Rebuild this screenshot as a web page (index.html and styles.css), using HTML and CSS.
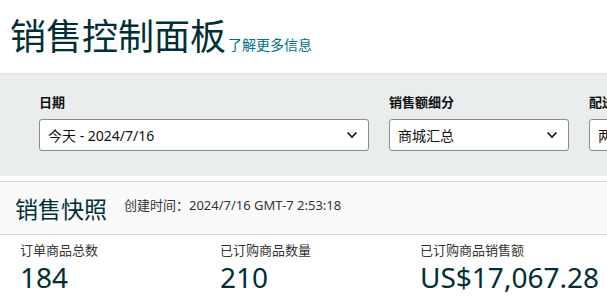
FILE: index.html
```html
<!DOCTYPE html>
<html lang="zh-CN">
<head>
    <meta charset="UTF-8">
    <meta name="viewport" content="width=device-width, initial-scale=1.0">
    <title>销售控制面板</title>
    <link rel="stylesheet" href="styles.css">
</head>
<body>
    <!-- Page title -->
    <div class="page-header">
        <h1 class="page-title">销售控制面板</h1>
        <a class="learn-more" href="#">了解更多信息</a>
    </div>

    <!-- Filters -->
    <div class="filters">
        <div class="filter filter-date">
            <label class="filter-label">日期</label>
            <div class="select">
                <span>今天 - 2024/7/16</span>
                <svg class="chevron" width="12" height="8" viewBox="0 0 12 8"><polyline points="1.5,1.5 6,6 10.5,1.5" fill="none" stroke="#0f1111" stroke-width="1.6"/></svg>
            </div>
        </div>
        <div class="filter filter-breakdown">
            <label class="filter-label">销售额细分</label>
            <div class="select">
                <span>商城汇总</span>
                <svg class="chevron" width="12" height="8" viewBox="0 0 12 8"><polyline points="1.5,1.5 6,6 10.5,1.5" fill="none" stroke="#0f1111" stroke-width="1.6"/></svg>
            </div>
        </div>
        <div class="filter filter-channel">
            <label class="filter-label">配送渠道</label>
            <div class="select">
                <span>两者</span>
            </div>
        </div>
    </div>

    <!-- Snapshot -->
    <div class="snapshot">
        <div class="snapshot-header">
            <h2 class="snapshot-title">销售快照</h2>
            <span class="snapshot-time">创建时间：2024/7/16 GMT-7 2:53:18</span>
        </div>
        <div class="metrics">
            <div class="metric">
                <p class="metric-label">订单商品总数</p>
                <p class="metric-value">184</p>
            </div>
            <div class="metric">
                <p class="metric-label">已订购商品数量</p>
                <p class="metric-value">210</p>
            </div>
            <div class="metric">
                <p class="metric-label">已订购商品销售额</p>
                <p class="metric-value">US$17,067.28</p>
            </div>
        </div>
    </div>
</body>
</html>
```
FILE: styles.css
```css
/* General */
body {
    margin: 0;
    font-family: "Noto Sans", "Noto Sans CJK SC", sans-serif;
    color: #0f1111;
    background: #fff;
    overflow: hidden;
}

p, h1, h2 {
    margin: 0;
}

/* Page header */
.page-header {
    display: flex;
    align-items: baseline;
    height: 73px;
    padding-left: 10px;
    box-sizing: border-box;
    padding-top: 13px;
}

.page-title {
    font-size: 36px;
    font-weight: 400;
    line-height: 48px;
    color: #002f36;
}

.learn-more {
    font-size: 14px;
    color: #007185;
    text-decoration: none;
    margin-left: 2px;
}

/* Filters band */
.filters {
    display: flex;
    gap: 20px;
    background: #eaeded;
    border-top: 1px solid #e3e6e6;
    padding: 19px 0 25px 39px;
    overflow: hidden;
    white-space: nowrap;
}

.filter {
    flex-shrink: 0;
}

.filter-label {
    display: block;
    font-size: 13px;
    font-weight: 700;
    line-height: 18px;
    margin-bottom: 8px;
}

.select {
    display: flex;
    align-items: center;
    justify-content: space-between;
    height: 32px;
    box-sizing: border-box;
    padding: 0 10px 0 8px;
    background: #fff;
    border: 1px solid #888c8c;
    border-radius: 3px;
    font-size: 14px;
    color: #0f1111;
}

.filter-date .select { width: 330px; }
.filter-breakdown .select { width: 180px; }
.filter-channel .select { width: 180px; }

/* Snapshot */
.snapshot {
    margin-top: 5px;
}

.snapshot-header {
    display: flex;
    align-items: center;
    height: 52px;
    padding-left: 15px;
    background: #fafafa;
    border-top: 1px solid #d5d9d9;
    border-bottom: 1px solid #d5d9d9;
}

.snapshot-title {
    font-size: 23px;
    font-weight: 400;
    color: #002f36;
}

.snapshot-time {
    font-size: 13px;
    color: #333;
    margin-left: 17px;
    margin-bottom: 7px;
}

.metrics {
    display: grid;
    grid-template-columns: repeat(3, 200px);
    padding: 6px 0 0 20px;
}

.metric-label {
    font-size: 13px;
    line-height: 18px;
    color: #333;
}

.metric-value {
    font-size: 28px;
    line-height: 36px;
    color: #002f36;
}
```
